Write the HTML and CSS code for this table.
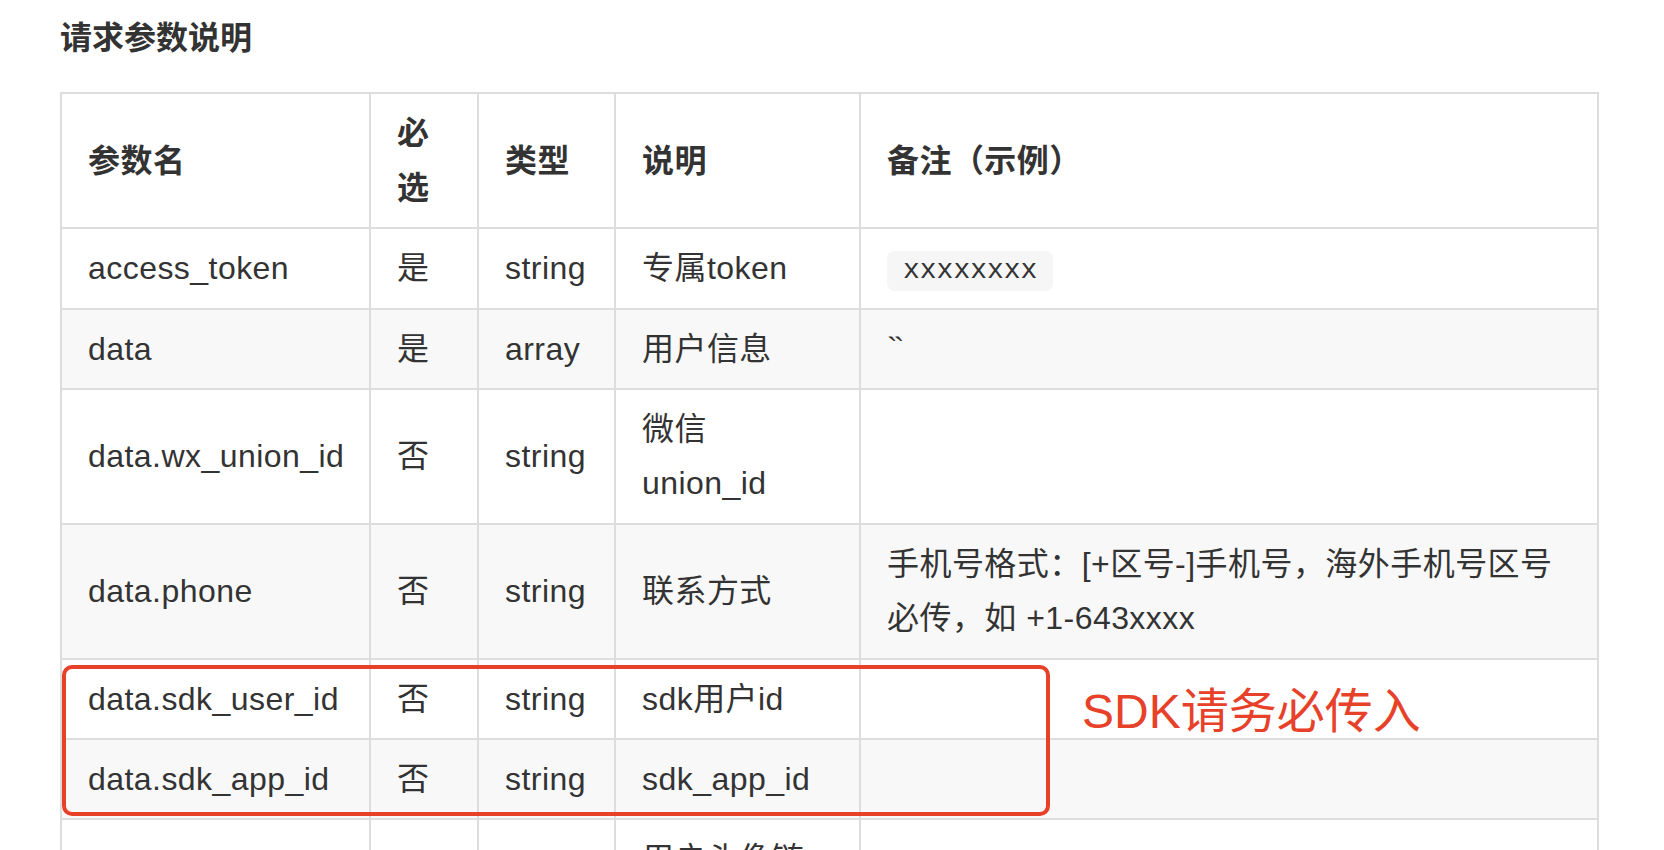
FILE: index.html
```html
<!DOCTYPE html>
<html lang="zh-CN">
<head>
<meta charset="utf-8">
<title>请求参数说明</title>
<link rel="stylesheet" href="styles.css">
</head>
<body>
<div class="page">
  <h3 class="title">请求参数说明</h3>
  <div class="table-wrap">
    <table class="params">
      <colgroup>
        <col class="c1"><col class="c2"><col class="c3"><col class="c4"><col class="c5">
      </colgroup>
      <thead>
        <tr><th>参数名</th><th>必选</th><th>类型</th><th>说明</th><th>备注（示例）</th></tr>
      </thead>
      <tbody>
        <tr><td>access_token</td><td>是</td><td>string</td><td>专属token</td><td><code class="code">xxxxxxxx</code></td></tr>
        <tr class="alt"><td>data</td><td>是</td><td>array</td><td>用户信息</td><td class="top"><span class="ticks">``</span></td></tr>
        <tr><td>data.wx_union_id</td><td>否</td><td>string</td><td>微信<br>union_id</td><td></td></tr>
        <tr class="alt"><td>data.phone</td><td>否</td><td>string</td><td>联系方式</td><td>手机号格式：[+区号-]手机号，海外手机号区号必传，如 +1-643xxxx</td></tr>
        <tr><td>data.sdk_user_id</td><td>否</td><td>string</td><td>sdk用户id</td><td></td></tr>
        <tr class="alt"><td>data.sdk_app_id</td><td>否</td><td>string</td><td>sdk_app_id</td><td></td></tr>
        <tr><td class="top-pad">data.avatar</td><td class="top-pad">否</td><td class="top-pad">string</td><td>用户头像链接地址</td><td></td></tr>
      </tbody>
    </table>
    <div class="mark-box"></div>
    <div class="mark-text">SDK请务必传入</div>
  </div>
</div>
</body>
</html>
```

FILE: styles.css
```css
html, body {
  margin: 0;
  padding: 0;
  background: #fff;
}
body {
  font-family: "Liberation Sans", "Noto Sans CJK SC", sans-serif;
  color: #333;
  font-size: 32px;
  line-height: 1.7;
}
.page {
  padding: 11px 0 0 60px;
}
.title {
  margin: 0 0 27px 0;
  font-size: 32px;
  line-height: 1.7;
  font-weight: bold;
  color: #333;
}
.table-wrap {
  position: relative;
  width: 1539px;
}
.params {
  table-layout: fixed;
  width: 1539px;
  border-collapse: separate;
  border-spacing: 0;
  border-top: 2px solid #dddddd;
  border-left: 2px solid #dddddd;
}
.params col.c1 { width: 309px; }
.params col.c2 { width: 108px; }
.params col.c3 { width: 137px; }
.params col.c4 { width: 245px; }
.params col.c5 { width: 738px; }
.params th,
.params td {
  box-sizing: border-box;
  padding: 12px 26px;
  border-right: 2px solid #dddddd;
  border-bottom: 2px solid #dddddd;
  text-align: left;
  vertical-align: middle;
  font-size: 32px;
  line-height: 54.4px;
  letter-spacing: 0.45px;
}
.params th {
  font-weight: bold;
}
.params tr.alt td {
  background: #f8f8f8;
}
.params td.top {
  vertical-align: top;
}
.ticks {
  letter-spacing: -4px;
}
.code {
  display: inline-block;
  font-family: "Liberation Mono", monospace;
  font-size: 28px;
  line-height: 32px;
  letter-spacing: 0;
  padding: 4px 16px;
  background: #f6f6f6;
  border-radius: 8px;
  color: #333;
  vertical-align: middle;
}
.mark-box {
  position: absolute;
  left: 2px;
  top: 573px;
  width: 988px;
  height: 151px;
  box-sizing: border-box;
  border: 4px solid #e8412a;
  border-radius: 10px;
}
.mark-text {
  position: absolute;
  left: 1022px;
  top: 596px;
  font-size: 48px;
  line-height: 48px;
  color: #e8412a;
  white-space: nowrap;
}
```
